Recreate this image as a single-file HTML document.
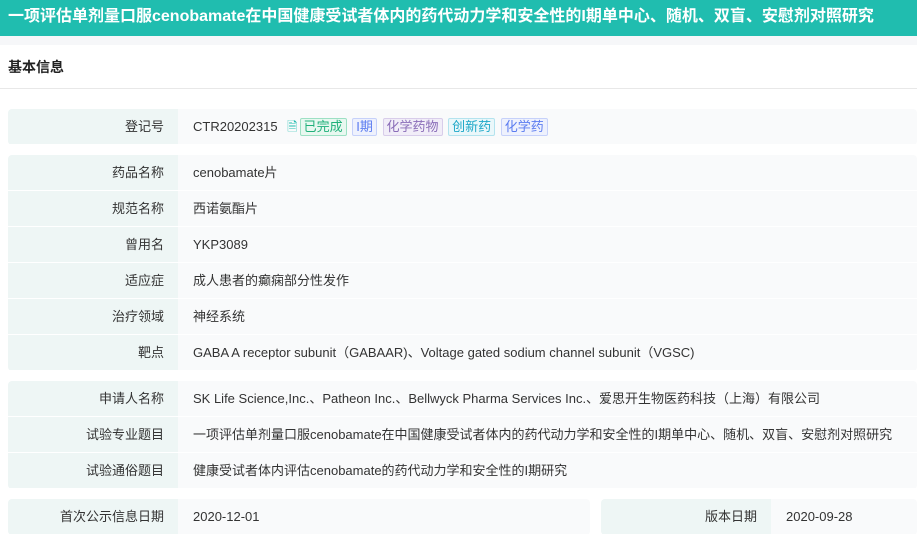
<html><head><style>
body{margin:0;width:917px;height:537px;overflow:hidden;background:#fff;font-family:"Liberation Sans","Noto Sans CJK SC",sans-serif;font-size:13px;color:#333}
.h{height:36px;background:#20bdaf;color:#fff;font-weight:bold;font-size:16px;line-height:34px;padding-left:8px;white-space:nowrap;overflow:hidden}
.g{height:9px;background:#f6f7f9}
.t{height:43px;line-height:44px;padding-left:8px;font-weight:bold;font-size:14px;border-bottom:1px solid #e8e8e8;color:#222}
.grp{position:absolute;left:8px;right:0;border-radius:4px;overflow:hidden}
.r{display:flex;height:35px;margin-bottom:1px;line-height:35px}
.l{width:156px;padding-right:14px;text-align:right;background:#eef6f5;flex:none}
.v{flex:1;background:#f9fafb;padding-left:15px;white-space:nowrap}
.tag{display:inline-block;line-height:16px;padding:0 3px;border:1px solid;border-radius:2px;margin-left:2px;font-size:13px}
</style></head><body>
<div class="h">一项评估单剂量口服cenobamate在中国健康受试者体内的药代动力学和安全性的I期单中心、随机、双盲、安慰剂对照研究</div>
<div class="g"></div>
<div class="t">基本信息</div>
<div class="grp" style="top:109px"><div class="r"><div class="l">登记号</div><div class="v">CTR20202315 <span style="color:#20bdaf;margin-left:6px">&#128462;</span><span class="tag" style="color:#20b07a;border-color:#9de0c4;background:#e8f8f0">已完成</span> <span class="tag" style="color:#5b7cf0;border-color:#c6d1fa;background:#eef1fd">I期</span> <span class="tag" style="color:#8a6db8;border-color:#d8cdea;background:#f1edf8">化学药物</span> <span class="tag" style="color:#1ea8c8;border-color:#b4e3ee;background:#eaf7fa">创新药</span> <span class="tag" style="color:#5b7cf0;border-color:#c6d1fa;background:#eef1fd">化学药</span></div></div></div>
<div class="grp" style="top:155px">
<div class="r"><div class="l">药品名称</div><div class="v">cenobamate片</div></div>
<div class="r"><div class="l">规范名称</div><div class="v">西诺氨酯片</div></div>
<div class="r"><div class="l">曾用名</div><div class="v">YKP3089</div></div>
<div class="r"><div class="l">适应症</div><div class="v">成人患者的癫痫部分性发作</div></div>
<div class="r"><div class="l">治疗领域</div><div class="v">神经系统</div></div>
<div class="r"><div class="l">靶点</div><div class="v">GABA A receptor subunit（GABAAR)、Voltage gated sodium channel subunit（VGSC)</div></div>
</div>
<div class="grp" style="top:381px">
<div class="r"><div class="l">申请人名称</div><div class="v">SK Life Science,Inc.、Patheon Inc.、Bellwyck Pharma Services Inc.、爱思开生物医药科技（上海）有限公司</div></div>
<div class="r"><div class="l">试验专业题目</div><div class="v">一项评估单剂量口服cenobamate在中国健康受试者体内的药代动力学和安全性的I期单中心、随机、双盲、安慰剂对照研究</div></div>
<div class="r"><div class="l">试验通俗题目</div><div class="v">健康受试者体内评估cenobamate的药代动力学和安全性的I期研究</div></div>
</div>
<div class="grp" style="top:499px;right:327px"><div class="r"><div class="l">首次公示信息日期</div><div class="v">2020-12-01</div></div></div>
<div class="grp" style="top:499px;left:601px"><div class="r"><div class="l" style="width:156px">版本日期</div><div class="v">2020-09-28</div></div></div>
</body></html>
